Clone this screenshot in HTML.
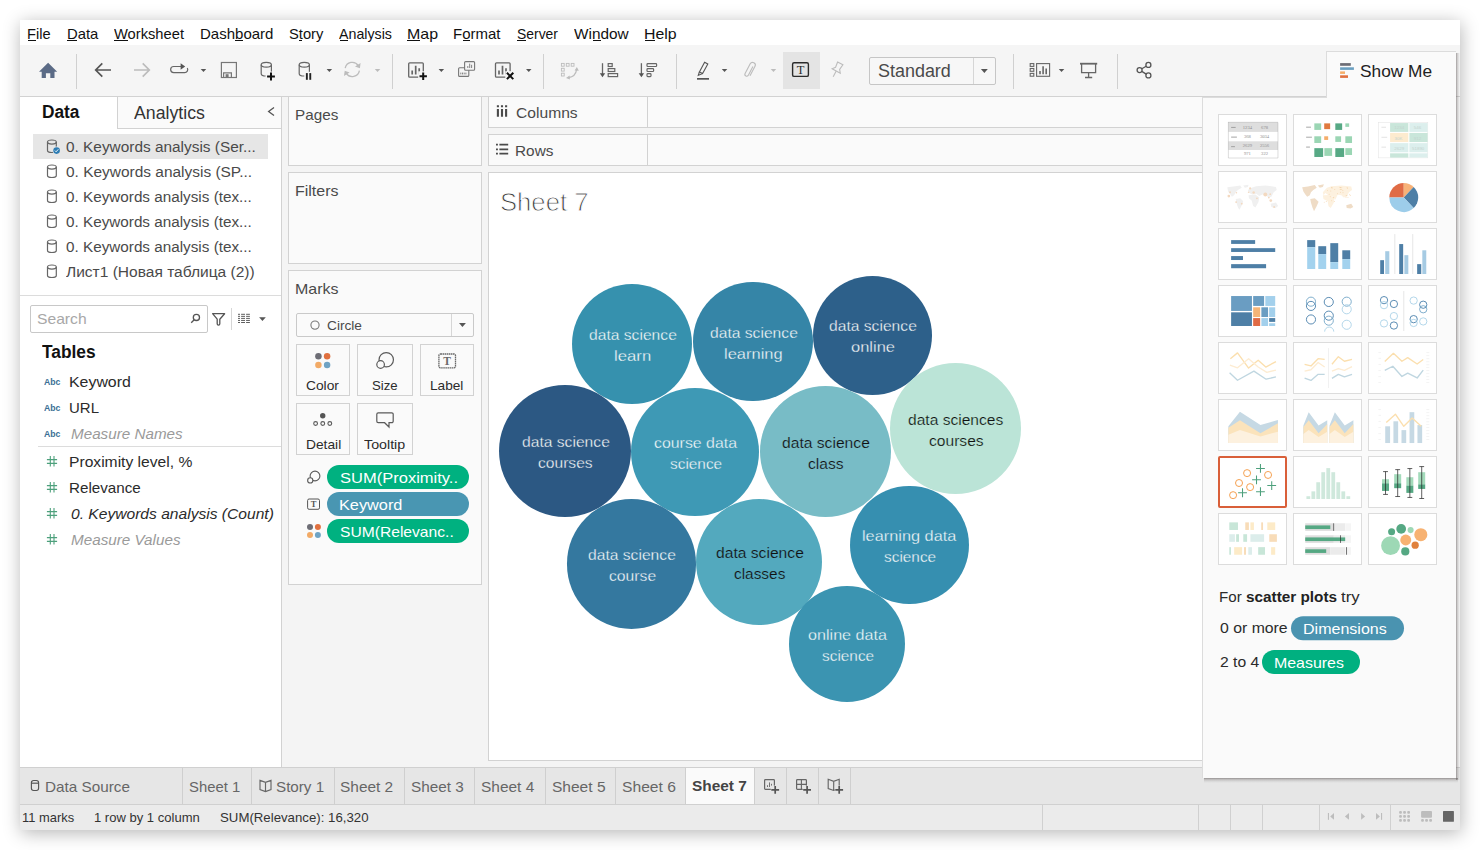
<!DOCTYPE html>
<html lang="en"><head><meta charset="utf-8"><title>Tableau - Sheet 7</title>
<style>
*{box-sizing:border-box;margin:0;padding:0}
html,body{width:1480px;height:850px;background:#fff;overflow:hidden}
body{font-family:"Liberation Sans","Noto Sans CJK SC",sans-serif;position:relative}
#win{position:absolute;left:0;top:0;width:1480px;height:850px}
.b{position:absolute}
.t{position:absolute;white-space:nowrap;line-height:20px;height:20px;transform-origin:0 0}
.ul{position:absolute;height:1px;background:#111}
.ov{position:absolute;left:0;top:0;pointer-events:none}
#frame{left:20px;top:20px;width:1440px;height:810px;background:#f4f4f4;box-shadow:1px 3px 17px rgba(0,0,0,.29)}
#menubar{left:20px;top:20px;width:1440px;height:25px;background:#fff}
#toolbar{left:20px;top:45px;width:1440px;height:52px;background:#f5f5f5;border-bottom:1px solid #d2d2d2}
.sep{width:1px;background:#d0d0d0;top:54px;height:35px}
#tsel{left:783px;top:52px;width:37px;height:37px;background:#e4e4e4}
#std{left:869px;top:57px;width:127px;height:28px;border:1px solid #c6c6c6;border-radius:2px;background:#f7f7f7}
#std i{position:absolute;left:103px;top:0;width:1px;height:26px;background:#d6d6d6}
#left{left:20px;top:97px;width:262px;height:670px;background:#fff;border-right:1px solid #d2d2d2}
#tabA{left:117px;top:97px;width:165px;height:32px;background:#fafafa;border-left:1px solid #d2d2d2;border-bottom:1px solid #d2d2d2;border-right:1px solid #d2d2d2}
#dsel{left:33px;top:134px;width:235px;height:25px;background:#e6e6e6}
#hr1{left:20px;top:295px;width:261px;height:1px;background:#dcdcdc}
#hr2{left:38px;top:446px;width:243px;height:1px;background:#dcdcdc}
#search{left:30px;top:305px;width:178px;height:28px;border:1px solid #c8c8c8;border-radius:2px;background:#fff}
#ssep{left:231px;top:308px;width:1px;height:22px;background:#d6d6d6}
.card{background:#fafafa;border:1px solid #d2d2d2}
#pages{left:288px;top:96px;width:194px;height:70px}
#filters{left:288px;top:172px;width:194px;height:92px}
#marks{left:288px;top:270px;width:194px;height:315px}
#mdd{left:296px;top:313px;width:178px;height:24px;border:1px solid #c9c9c9;border-radius:2px;background:#fafafa}
#mdd i{position:absolute;left:154px;top:0;width:1px;height:22px;background:#d6d6d6}
.mb{border:1px solid #d2d2d2;background:#fafafa;height:52px;top:344px}
.pill{height:24px;border-radius:12px}
.g{background:#00b180}.bl{background:#4996b2}
#cols{left:488px;top:96px;width:966px;height:32px}
#rows{left:488px;top:134px;width:966px;height:32px}
.shsep{width:1px;background:#d2d2d2;left:647px}
#view{left:488px;top:172px;width:966px;height:589px;background:#fff;border:1px solid #d2d2d2}
#tabbar{left:20px;top:767px;width:1440px;height:38px;background:#e6e6e6;border-top:1px solid #d0d0d0;border-bottom:1px solid #d0d0d0}
.tsep{top:768px;width:1px;height:36px;background:#cfcfcf}
#tabact{left:686px;top:768px;width:68px;height:36px;background:#fafafa}
#status{left:20px;top:805px;width:1440px;height:25px;background:#ebebeb}
.ssp{top:805px;width:1px;height:25px;background:#d0d0d0}
#showme{position:absolute;left:1202px;top:97px;width:254px;height:681px;background:#fafafa;border-left:1px solid #dcdcdc}
#showtab{position:absolute;left:1326px;top:51px;width:130px;height:47px;background:#fafafa;border-left:1px solid #dcdcdc;border-top:1px solid #dcdcdc}
#showjoin{position:absolute;left:1327px;top:92px;width:129px;height:12px;background:#fafafa}
.bub{position:absolute;border-radius:50%}
#shr{position:absolute;left:1456px;top:53px;width:4px;height:727px;background:linear-gradient(90deg,rgba(70,62,62,.48),rgba(70,62,62,.22) 35%,rgba(0,0,0,.05) 75%,rgba(0,0,0,0))}
#shb{position:absolute;left:1204px;top:778px;width:254px;height:5px;background:linear-gradient(180deg,rgba(70,62,62,.5),rgba(70,62,62,.2) 35%,rgba(0,0,0,.05) 70%,rgba(0,0,0,0))}
#sht{position:absolute;left:1203px;top:97px;width:123px;height:1px;background:#dcdcdc}

</style></head>
<body>
<div id="win">
<div class="b" id="frame"></div>
<div class="b" id="menubar"></div>
<div class="b" id="toolbar"></div>
<div class="b sep" style="left:76px"></div><div class="b sep" style="left:392px"></div><div class="b sep" style="left:543px"></div><div class="b sep" style="left:676px"></div><div class="b sep" style="left:1013px"></div><div class="b sep" style="left:1117px"></div>
<div class="b" id="tsel"></div>
<div class="b" id="std"><i></i></div>
<div class="b" id="left"></div>
<div class="b" id="tabA"></div>
<div class="b" id="dsel"></div>
<div class="b" id="hr1"></div><div class="b" id="hr2"></div>
<div class="b" id="search"></div><div class="b" id="ssep"></div>
<div class="b card" id="pages"></div>
<div class="b card" id="filters"></div>
<div class="b card" id="marks"></div>
<div class="b" id="mdd"><i></i></div>
<div class="b mb" style="left:296px;width:54px"></div><div class="b mb" style="left:357px;width:56px"></div><div class="b mb" style="left:420px;width:54px"></div>
<div class="b mb" style="left:296px;width:54px;top:403px"></div><div class="b mb" style="left:357px;width:56px;top:403px"></div>
<div class="b pill g" style="left:327px;top:465px;width:142px"></div>
<div class="b pill bl" style="left:327px;top:492px;width:142px"></div>
<div class="b pill g" style="left:327px;top:519px;width:142px"></div>
<div class="b card" id="cols"></div><div class="b shsep" style="top:97px;height:30px"></div>
<div class="b card" id="rows"></div><div class="b shsep" style="top:135px;height:30px"></div>
<div class="b" id="view"></div>
<div class="b" id="tabbar"></div>
<div class="b" id="tabact"></div>
<div class="b tsep" style="left:182px"></div><div class="b tsep" style="left:251px"></div><div class="b tsep" style="left:334px"></div><div class="b tsep" style="left:404px"></div><div class="b tsep" style="left:474px"></div><div class="b tsep" style="left:545px"></div><div class="b tsep" style="left:615px"></div><div class="b tsep" style="left:685px"></div><div class="b tsep" style="left:754px"></div><div class="b tsep" style="left:786px"></div><div class="b tsep" style="left:818px"></div><div class="b tsep" style="left:850px"></div>
<div class="b" id="status"></div>
<div class="b ssp" style="left:1042px"></div><div class="b ssp" style="left:1198px"></div><div class="b ssp" style="left:1230px"></div><div class="b ssp" style="left:1262px"></div><div class="b ssp" style="left:1319px"></div><div class="b ssp" style="left:1390px"></div>

<div class="bub" style="left:571.9px;top:284.1px;width:120.4px;height:120.4px;background:#3691ae"></div>
<div class="bub" style="left:693.3px;top:281.9px;width:119.4px;height:119.4px;background:#3585a7"></div>
<div class="bub" style="left:812.6px;top:275.6px;width:119.0px;height:119.0px;background:#2d608a"></div>
<div class="bub" style="left:889.7px;top:363.1px;width:131.4px;height:131.4px;background:#bbe4d7"></div>
<div class="bub" style="left:499.0px;top:385.1px;width:132.0px;height:132.0px;background:#2c5883"></div>
<div class="bub" style="left:631.3px;top:388.1px;width:127.8px;height:127.8px;background:#3e99b5"></div>
<div class="bub" style="left:760.0px;top:386.3px;width:131.0px;height:131.0px;background:#78bcc6"></div>
<div class="bub" style="left:567.0px;top:499.4px;width:129.2px;height:129.2px;background:#34789f"></div>
<div class="bub" style="left:696.1px;top:499.0px;width:126.0px;height:126.0px;background:#53a9be"></div>
<div class="bub" style="left:850.2px;top:485.7px;width:118.8px;height:118.8px;background:#368fb0"></div>
<div class="bub" style="left:789.0px;top:586.3px;width:116.2px;height:116.2px;background:#3b94b1"></div>
<svg class="ov" width="1480" height="850" viewBox="0 0 1480 850"><path d="M48.1 62.7 L57.2 71.7 H54.5 V78 H50.3 V73.2 H45.9 V78 H41.7 V71.7 H39 Z" fill="#5b6b86"/>
<path d="M96 70 H111 M102.3 63.4 L95.7 70 L102.3 76.6" fill="none" stroke="#555" stroke-width="1.7"/>
<path d="M134 70 H149 M142.7 63.4 L149.3 70 L142.7 76.6" fill="none" stroke="#bcbcbc" stroke-width="1.7"/>
<path d="M181 66.5 H173.7 a3.05 3.05 0 0 0 0 6.1 H184.6 a3.05 3.05 0 0 0 2.7 -4.6" fill="none" stroke="#666" stroke-width="1.2"/><path d="M180.6 63.3 L185.2 66.5 L180.6 69.7 Z" fill="#555"/>
<polygon points="200.7,69 206.2,69 203.45,72" fill="#555"/>
<rect x="221.4" y="62.5" width="15" height="15" fill="none" stroke="#777" stroke-width="1.2"/><path d="M223.6 77.5 V72.8 H231.4 V77.5" fill="none" stroke="#777" stroke-width="1.2"/><rect x="225.6" y="74.2" width="3" height="3.4" fill="#777"/>
<g fill="none" stroke="#666" stroke-width="1.2"><ellipse cx="266.3" cy="64.746" rx="5.1" ry="2.346"/><path d="M261.2 64.746 V73.654 A5.1 2.346 0 0 0 271.4 73.654 V64.746"/></g>
<rect x="265.6" y="71.6" width="10" height="9" fill="#f5f5f5"/>
<path d="M267.1 76.5 H274.9 M271 72.6 V80.4" stroke="#111" stroke-width="2" fill="none"/>
<g fill="none" stroke="#666" stroke-width="1.2"><ellipse cx="304.3" cy="64.746" rx="5.1" ry="2.346"/><path d="M299.2 64.746 V73.654 A5.1 2.346 0 0 0 309.4 73.654 V64.746"/></g>
<rect x="304.3" y="71.8" width="8.5" height="9" fill="#f5f5f5"/>
<rect x="305.9" y="73.1" width="1.9" height="6.7" fill="#222"/><rect x="309.3" y="73.1" width="1.9" height="6.7" fill="#222"/>
<polygon points="326.6,69 332.1,69 329.35,72" fill="#555"/>
<g fill="none" stroke="#bcbcbc" stroke-width="1.3"><path d="M345.2 68.2 A7.2 7.2 0 0 1 358.3 65.6"/><path d="M359.4 70.6 A7.2 7.2 0 0 1 346.3 73.3"/></g><path d="M360.6 62.9 L359.9 68.2 L355 66.4 Z" fill="#bcbcbc"/><path d="M344 76 L344.7 70.7 L349.6 72.5 Z" fill="#bcbcbc"/>
<polygon points="374.8,69 380.3,69 377.55,72" fill="#bcbcbc"/>
<rect x="408.7" y="62.8" width="14.6" height="14.4" rx="1" fill="none" stroke="#666" stroke-width="1.3"/>
<path d="M412.2 74.6 V70.6 M415.7 74.6 V65.8 M419.2 74.6 V68.2" stroke="#666" stroke-width="1.7" fill="none"/>
<rect x="418.2" y="71.3" width="9.5" height="9.5" fill="#f5f5f5"/>
<path d="M419.5 76.2 H426.9 M423.2 72.5 V79.9" stroke="#111" stroke-width="2" fill="none"/>
<polygon points="438.6,69 444.1,69 441.35,72" fill="#555"/>
<g fill="#f5f5f5" stroke="#777" stroke-width="1.1"><rect x="458.6" y="67.8" width="10.2" height="8.6" rx="1"/><rect x="464.6" y="61.6" width="10" height="8.6" rx="1"/></g><path d="M467.8 68 V66 M469.7 68 V63.6 M471.6 68 V64.8 M460.8 74.4 V72.6 M462.5 74.4 V72.6 M464.2 74.4 V72.6 M465.9 74.4 V72.6" stroke="#777" stroke-width="0.9" fill="none"/>
<rect x="495.5" y="62.8" width="14.6" height="14.4" rx="1" fill="none" stroke="#666" stroke-width="1.3"/>
<path d="M499 74.6 V70.6 M502.5 74.6 V65.8 M506 74.6 V68.2" stroke="#666" stroke-width="1.7" fill="none"/>
<rect x="505.3" y="71.2" width="9.5" height="9.5" fill="#f5f5f5"/>
<path d="M506.9 72.7 L513.3 79.1 M513.3 72.7 L506.9 79.1" stroke="#111" stroke-width="2" fill="none"/>
<polygon points="526,69 531.5,69 528.75,72" fill="#555"/>
<g fill="none" stroke="#bcbcbc" stroke-width="0.9"><rect x="561.4" y="63.4" width="2.8" height="2.8"/><rect x="566.3" y="63.4" width="2.8" height="2.8"/><rect x="571.2" y="63.4" width="2.8" height="2.8"/><rect x="561.4" y="68.3" width="2.8" height="2.8"/><rect x="561.4" y="73.2" width="2.8" height="2.8"/></g>
<path d="M568.5 77.6 Q575.6 76.6 576.6 69.6" fill="none" stroke="#bcbcbc" stroke-width="1.2"/><path d="M566 77.9 L569.6 75.5 L569.9 79.5 Z M576.9 67 L578.8 70.8 L574.6 70.6 Z" fill="#bcbcbc"/>
<path d="M602.5 63.2 V75" stroke="#666" stroke-width="1.3" fill="none"/><path d="M599.8 73.2 H605.2 L602.5 77.2 Z" fill="#555"/>
<g fill="none" stroke="#666" stroke-width="1.2"><rect x="608.2" y="63.6" width="4" height="2.9"/><rect x="608.2" y="68.6" width="6.6" height="2.9"/><rect x="608.2" y="73.6" width="9.4" height="3"/></g>
<path d="M641.4 63.2 V75" stroke="#666" stroke-width="1.3" fill="none"/><path d="M638.7 73.2 H644.1 L641.4 77.2 Z" fill="#555"/>
<g fill="none" stroke="#666" stroke-width="1.2"><rect x="647" y="63.6" width="9.6" height="2.9" rx="0.8"/><rect x="647" y="68.6" width="6.6" height="2.9" rx="0.8"/><rect x="647" y="73.6" width="4" height="3" rx="0.8"/></g>
<g fill="none" stroke="#555" stroke-width="1.1"><path d="M704.6 62.3 L707.8 64 L702.6 73.6 L699.4 71.9 Z"/><path d="M699.4 71.9 L698.3 75.4 L702.6 73.6"/></g><rect x="697" y="78" width="12" height="1.7" fill="#555"/>
<polygon points="721.8,69 727.3,69 724.55,72" fill="#555"/>
<path d="M752.6 66.3 L748.2 74.9 a1.9 1.9 0 0 1 -3.4 -1.7 L749.9 63.6 a2.7 2.7 0 0 1 4.8 2.5 L749.7 75.6" transform="translate(0.3,0.2)" fill="none" stroke="#bcbcbc" stroke-width="1.1"/>
<polygon points="770.7,69 776.2,69 773.45,72" fill="#bcbcbc"/>
<rect x="792.6" y="62.8" width="15.8" height="13.6" rx="1.5" fill="none" stroke="#2b2b2b" stroke-width="1.4"/><text x="800.5" y="73.85" text-anchor="middle" font-family="Liberation Serif,serif" font-size="12.5" font-weight="400" fill="#2b2b2b">T</text>
<g fill="none" stroke="#bcbcbc" stroke-width="1.1" transform="rotate(28 837 69.5)"><path d="M834 62.6 H840 L839.3 68.2 L841.6 71.2 H832.4 L834.7 68.2 Z"/><path d="M837 71.2 V77.6"/></g>
<polygon points="980.9,68.9 987.8,68.9 984.35,73.10000000000001" fill="#555"/>
<g fill="none" stroke="#666" stroke-width="1.1"><rect x="1030.2" y="63.6" width="3.6" height="2.8"/><rect x="1030.2" y="68.5" width="3.6" height="2.8"/><rect x="1030.2" y="73.4" width="3.6" height="2.8"/><rect x="1036.6" y="63.6" width="13" height="12.7"/></g>
<path d="M1040 74.2 V71 M1043.1 74.2 V66.2 M1046.2 74.2 V68.6" stroke="#666" stroke-width="1.6" fill="none"/>
<polygon points="1058.8,69 1064.3,69 1061.55,72" fill="#555"/>
<path d="M1080 63.7 H1097.2" stroke="#666" stroke-width="1.8"/><path d="M1081.6 64 V72.6 H1095.6 V64 M1088.6 72.6 V77.4 M1085 77.5 H1092.2" fill="none" stroke="#666" stroke-width="1.3"/>
<g fill="none" stroke="#555" stroke-width="1.3"><circle cx="1148.4" cy="64.9" r="2.5"/><circle cx="1139.6" cy="70.1" r="2.5"/><circle cx="1148.4" cy="75.4" r="2.5"/><path d="M1141.8 68.8 L1146.2 66.2 M1141.8 71.4 L1146.2 74.1"/></g>
<path d="M274 107.4 L268.6 111.5 L274 115.6" fill="none" stroke="#555" stroke-width="1.3"/>
<g fill="none" stroke="#666" stroke-width="1.2"><ellipse cx="51.9" cy="142.024" rx="4.4" ry="2.0240000000000005"/><path d="M47.5 142.024 V150.476 A4.4 2.0240000000000005 0 0 0 56.3 150.476 V142.024"/></g>
<circle cx="56.6" cy="150.6" r="4" fill="#e6e6e6"/><circle cx="56.6" cy="150.6" r="3.3" fill="#2e7db4"/><path d="M54.9 150.6 L56.1 151.8 L58.3 149.3" fill="none" stroke="#fff" stroke-width="0.9"/>
<g fill="none" stroke="#666" stroke-width="1.2"><ellipse cx="51.9" cy="167.024" rx="4.4" ry="2.0240000000000005"/><path d="M47.5 167.024 V175.476 A4.4 2.0240000000000005 0 0 0 56.3 175.476 V167.024"/></g>
<g fill="none" stroke="#666" stroke-width="1.2"><ellipse cx="51.9" cy="192.024" rx="4.4" ry="2.0240000000000005"/><path d="M47.5 192.024 V200.476 A4.4 2.0240000000000005 0 0 0 56.3 200.476 V192.024"/></g>
<g fill="none" stroke="#666" stroke-width="1.2"><ellipse cx="51.9" cy="217.024" rx="4.4" ry="2.0240000000000005"/><path d="M47.5 217.024 V225.476 A4.4 2.0240000000000005 0 0 0 56.3 225.476 V217.024"/></g>
<g fill="none" stroke="#666" stroke-width="1.2"><ellipse cx="51.9" cy="242.024" rx="4.4" ry="2.0240000000000005"/><path d="M47.5 242.024 V250.476 A4.4 2.0240000000000005 0 0 0 56.3 250.476 V242.024"/></g>
<g fill="none" stroke="#666" stroke-width="1.2"><ellipse cx="51.9" cy="267.024" rx="4.4" ry="2.0240000000000005"/><path d="M47.5 267.024 V275.476 A4.4 2.0240000000000005 0 0 0 56.3 275.476 V267.024"/></g>
<g fill="none" stroke="#555" stroke-width="1.3"><circle cx="196.4" cy="317.4" r="3.1"/><path d="M194.2 319.7 L191.2 322.8"/></g>
<path d="M212.6 313.7 H224.6 L219.8 319.2 V323.8 a1.3 1.3 0 0 1 -2.6 0 V319.2 Z" fill="none" stroke="#555" stroke-width="1.3" stroke-linejoin="round"/>
<path d="M238 314.3 H240 M241.1 314.3 H245 M246.1 314.3 H249.9 M238 316.35 H240 M241.1 316.35 H245 M246.1 316.35 H249.9 M238 318.4 H240 M241.1 318.4 H245 M246.1 318.4 H249.9 M238 320.45 H240 M241.1 320.45 H245 M246.1 320.45 H249.9 M238 322.5 H240 M241.1 322.5 H245 M246.1 322.5 H249.9 " stroke="#555" stroke-width="0.95" fill="none"/>
<polygon points="259.1,317.3 265.8,317.3 262.45000000000005,321.1" fill="#555"/>
<path d="M50.3 456.1 V466.5 M54 456.1 V466.5 M46.9 459.6 H57.1 M46.9 463.40000000000003 H57.1" stroke="#4da07c" stroke-width="1.1" fill="none"/>
<path d="M50.3 482.1 V492.5 M54 482.1 V492.5 M46.9 485.6 H57.1 M46.9 489.40000000000003 H57.1" stroke="#4da07c" stroke-width="1.1" fill="none"/>
<path d="M50.3 508.1 V518.5 M54 508.1 V518.5 M46.9 511.6 H57.1 M46.9 515.4 H57.1" stroke="#4da07c" stroke-width="1.1" fill="none"/>
<path d="M50.3 534.1 V544.5 M54 534.1 V544.5 M46.9 537.6 H57.1 M46.9 541.4 H57.1" stroke="#4da07c" stroke-width="1.1" fill="none"/>
<path d="M497.9 109 V116.7 M502 109 V116.7 M506.1 109 V116.7" stroke="#4a4a4a" stroke-width="2.1" fill="none"/><path d="M496.85 106.25 H498.95 M500.95 106.25 H503.05 M505.05 106.25 H507.15" stroke="#4a4a4a" stroke-width="2.1"/>
<path d="M499.4 144.7 H508.2 M499.4 149.3 H508.2 M499.4 153.6 H508.2" stroke="#4a4a4a" stroke-width="1.8" fill="none"/><path d="M496 144.7 H497.9 M496 149.3 H497.9 M496 153.6 H497.9" stroke="#4a4a4a" stroke-width="1.8"/>
<circle cx="315" cy="325.1" r="4.1" fill="none" stroke="#7a7a7a" stroke-width="1.1"/>
<polygon points="459,323 465.9,323 462.45,327" fill="#555"/>
<circle cx="318.4" cy="356.2" r="3.25" fill="#6d6d75"/><circle cx="327.1" cy="356.2" r="3.25" fill="#e0703f"/><circle cx="318.4" cy="364.90000000000003" r="3.25" fill="#f2aa66"/><circle cx="327.1" cy="364.90000000000003" r="3.25" fill="#6fa3c4"/>
<g fill="none" stroke="#5a5a5a" stroke-width="1.2"><circle cx="386.25" cy="359.75" r="7.2"/><circle cx="380.6" cy="364.5" r="3.8" fill="#fafafa"/></g>
<rect x="438.9" y="354" width="16.6" height="13.8" rx="1.5" fill="none" stroke="#6a6a6a" stroke-width="1.3" stroke-dasharray="1.6 0.5"/><text x="447.2" y="364.81" text-anchor="middle" font-family="Liberation Serif,serif" font-size="11.5" font-weight="700" fill="#6a6a6a">T</text>
<circle cx="322.75" cy="415.75" r="2.7" fill="#555"/><g fill="none" stroke="#5a5a5a" stroke-width="1.1"><circle cx="315.6" cy="423.5" r="1.9"/><circle cx="322.75" cy="423.5" r="1.9"/><circle cx="329.8" cy="423.5" r="1.9"/></g>
<path d="M378.2 412.8 H391.8 a1.4 1.4 0 0 1 1.4 1.4 V421.3 a1.4 1.4 0 0 1 -1.4 1.4 H389 V427 L384.6 422.7 H378.2 a1.4 1.4 0 0 1 -1.4 -1.4 V414.2 a1.4 1.4 0 0 1 1.4 -1.4 Z" fill="none" stroke="#5a5a5a" stroke-width="1.2"/>
<g fill="none" stroke="#5a5a5a" stroke-width="1.1"><circle cx="315" cy="476" r="4.9"/><circle cx="310.25" cy="480.4" r="2.6" fill="#fafafa"/></g>
<rect x="307.6" y="499" width="11.9" height="10.3" rx="1.5" fill="none" stroke="#555" stroke-width="1"/><text x="313.55" y="507.03999999999996" text-anchor="middle" font-family="Liberation Serif,serif" font-size="8.5" font-weight="700" fill="#555">T</text>
<circle cx="310.0" cy="527.0" r="3" fill="#6d6d75"/><circle cx="317.9" cy="527.0" r="3" fill="#e0703f"/><circle cx="310.0" cy="534.9000000000001" r="3" fill="#f2aa66"/><circle cx="317.9" cy="534.9000000000001" r="3" fill="#6fa3c4"/>
<g fill="none" stroke="#555" stroke-width="1.15"><rect x="31.4" y="780.5" width="7.2" height="10" rx="2.2"/><path d="M31.4 783.2 H38.6"/></g>
<path d="M260 780.4 L265.5 782.4 L271 780.4 V789.6 L265.5 791.6 L260 789.6 Z M265.5 782.4 V791.6" fill="none" stroke="#666" stroke-width="1.15"/>
<rect x="764.6" y="779.6" width="9.8" height="9.7" rx="0.8" fill="none" stroke="#666" stroke-width="1.2"/><path d="M767.5 787 V785.2 M769.5 787 V782.4 M771.5 787 V783.8" stroke="#666" stroke-width="0.9"/>
<rect x="770.8" y="785.6" width="9" height="9" fill="#e6e6e6"/>
<path d="M771.3000000000001 789.9 H779.1 M775.2 786.0 V793.8" stroke="#555" stroke-width="1.7" fill="none"/>
<rect x="796.6" y="779.6" width="9.8" height="9.7" rx="0.8" fill="none" stroke="#666" stroke-width="1.2"/><path d="M801.4 779.6 V789.3 M796.6 784.4 H806.4" stroke="#666" stroke-width="1.1"/>
<rect x="802.7" y="785.6" width="9" height="9" fill="#e6e6e6"/>
<path d="M803.2 789.9 H811.0 M807.1 786.0 V793.8" stroke="#555" stroke-width="1.7" fill="none"/>
<path d="M828.2 779.3 L833.7 781.3 L839.2 779.3 V788.5 L833.7 790.5 L828.2 788.5 Z M833.7 781.3 V790.5" fill="none" stroke="#666" stroke-width="1.15"/>
<rect x="834.8" y="785.6" width="9" height="9" fill="#e6e6e6"/>
<path d="M835.3000000000001 789.9 H843.1 M839.2 786.0 V793.8" stroke="#555" stroke-width="1.7" fill="none"/>
<g fill="#bdbdbd"><rect x="1327.9" y="813" width="1.1" height="6.8"/><path d="M1334 813 V819.8 L1330.2 816.4 Z"/><path d="M1349 813 V819.8 L1344.9 816.4 Z"/><path d="M1361.1 813 V819.8 L1365.1 816.4 Z"/><path d="M1376 813 V819.8 L1379.9 816.4 Z"/><rect x="1381" y="813" width="1.1" height="6.8"/></g>
<g fill="#bdbdbd"><rect x="1399.1" y="810.9" width="2.8" height="2.8" rx="1"/><rect x="1399.1" y="814.9499999999999" width="2.8" height="2.8" rx="1"/><rect x="1399.1" y="819.0" width="2.8" height="2.8" rx="1"/><rect x="1403.1499999999999" y="810.9" width="2.8" height="2.8" rx="1"/><rect x="1403.1499999999999" y="814.9499999999999" width="2.8" height="2.8" rx="1"/><rect x="1403.1499999999999" y="819.0" width="2.8" height="2.8" rx="1"/><rect x="1407.1999999999998" y="810.9" width="2.8" height="2.8" rx="1"/><rect x="1407.1999999999998" y="814.9499999999999" width="2.8" height="2.8" rx="1"/><rect x="1407.1999999999998" y="819.0" width="2.8" height="2.8" rx="1"/></g>
<g fill="#bdbdbd"><rect x="1421.1" y="810.9" width="10.9" height="6.8" rx="1"/><rect x="1421.1" y="819" width="2.8" height="2.8" rx="1"/><rect x="1425.1499999999999" y="819" width="2.8" height="2.8" rx="1"/><rect x="1429.1999999999998" y="819" width="2.8" height="2.8" rx="1"/></g>
<rect x="1443" y="810.9" width="10.9" height="10.9" rx="0.6" fill="#666"/></svg>
<i class="ul" style="left:27.68px;top:40px;width:8.34px"></i>
<span class="t" style="left:27.38px;top:24px;font-size:15px;color:#111;transform:scaleX(0.9753);">File</span>
<i class="ul" style="left:66.86px;top:40px;width:10.13px"></i>
<span class="t" style="left:66.56px;top:24px;font-size:15px;color:#111;transform:scaleX(0.9902);">Data</span>
<i class="ul" style="left:114.30px;top:40px;width:13.27px"></i>
<span class="t" style="left:114.00px;top:24px;font-size:15px;color:#111;transform:scaleX(0.9796);">Worksheet</span>
<i class="ul" style="left:234.99px;top:40px;width:7.75px"></i>
<span class="t" style="left:199.65px;top:24px;font-size:15px;color:#111;transform:scaleX(1.0007);">Dashboard</span>
<i class="ul" style="left:298.78px;top:40px;width:3.49px"></i>
<span class="t" style="left:288.66px;top:24px;font-size:15px;color:#111;transform:scaleX(0.9810);">Story</span>
<i class="ul" style="left:339.60px;top:40px;width:8.89px"></i>
<span class="t" style="left:339.30px;top:24px;font-size:15px;color:#111;transform:scaleX(0.9484);">Analysis</span>
<i class="ul" style="left:407.37px;top:40px;width:12.70px"></i>
<span class="t" style="left:407.07px;top:24px;font-size:15px;color:#111;transform:scaleX(1.0642);">Map</span>
<i class="ul" style="left:462.60px;top:40px;width:7.73px"></i>
<span class="t" style="left:453.15px;top:24px;font-size:15px;color:#111;transform:scaleX(0.9989);">Format</span>
<i class="ul" style="left:516.90px;top:40px;width:8.68px"></i>
<span class="t" style="left:516.60px;top:24px;font-size:15px;color:#111;transform:scaleX(0.9272);">Server</span>
<i class="ul" style="left:592.60px;top:40px;width:7.94px"></i>
<span class="t" style="left:574.40px;top:24px;font-size:15px;color:#111;transform:scaleX(1.0235);">Window</span>
<i class="ul" style="left:644.58px;top:40px;width:10.87px"></i>
<span class="t" style="left:644.28px;top:24px;font-size:15px;color:#111;transform:scaleX(1.0586);">Help</span>
<span class="t" style="left:878.13px;top:60.8px;font-size:17.5px;color:#4a4a4a;transform:scaleX(1.0253);">Standard</span>
<span class="t" style="left:42.00px;top:102px;font-size:18px;color:#111;transform:scaleX(0.9605);font-weight:700;">Data</span>
<span class="t" style="left:134.00px;top:103px;font-size:17.5px;color:#333;transform:scaleX(1.0115);">Analytics</span>
<span class="t" style="left:65.95px;top:136.5px;font-size:14px;color:#4a4a4a;transform:scaleX(1.0988);">0. Keywords analysis (Ser...</span>
<span class="t" style="left:65.95px;top:161.5px;font-size:14px;color:#4a4a4a;transform:scaleX(1.1034);">0. Keywords analysis (SP...</span>
<span class="t" style="left:65.95px;top:186.5px;font-size:14px;color:#4a4a4a;transform:scaleX(1.0904);">0. Keywords analysis (tex...</span>
<span class="t" style="left:65.95px;top:211.5px;font-size:14px;color:#4a4a4a;transform:scaleX(1.0904);">0. Keywords analysis (tex...</span>
<span class="t" style="left:65.95px;top:236.5px;font-size:14px;color:#4a4a4a;transform:scaleX(1.0904);">0. Keywords analysis (tex...</span>
<span class="t" style="left:65.80px;top:261.5px;font-size:14px;color:#4a4a4a;transform:scaleX(1.1090);">Лист1 (Новая таблица (2))</span>
<span class="t" style="left:37.39px;top:309px;font-size:14.5px;color:#a8a8a8;transform:scaleX(1.0802);">Search</span>
<span class="t" style="left:42.26px;top:342px;font-size:18px;color:#111;transform:scaleX(0.9626);font-weight:700;">Tables</span>
<span class="t" style="left:69.28px;top:372px;font-size:15px;color:#2b2b2b;transform:scaleX(1.0596);">Keyword</span>
<span class="t" style="left:69.35px;top:398px;font-size:15px;color:#2b2b2b;transform:scaleX(0.9982);">URL</span>
<span class="t" style="left:70.99px;top:424px;font-size:15px;color:#9a9a9a;transform:scaleX(1.0151);font-style:italic;">Measure Names</span>
<span class="t" style="left:69.30px;top:452px;font-size:15px;color:#2b2b2b;transform:scaleX(1.0421);">Proximity level, %</span>
<span class="t" style="left:69.34px;top:478px;font-size:15px;color:#2b2b2b;transform:scaleX(1.0116);">Relevance</span>
<span class="t" style="left:70.72px;top:504px;font-size:15px;color:#2b2b2b;transform:scaleX(1.0398);font-style:italic;">0. Keywords analysis (Count)</span>
<span class="t" style="left:70.99px;top:530px;font-size:15px;color:#9a9a9a;transform:scaleX(1.0159);font-style:italic;">Measure Values</span>
<span class="t" style="left:43.86px;top:372px;font-size:9px;color:#3a6f95;transform:scaleX(0.9636);font-weight:700;">Abc</span>
<span class="t" style="left:43.86px;top:398px;font-size:9px;color:#3a6f95;transform:scaleX(0.9636);font-weight:700;">Abc</span>
<span class="t" style="left:43.86px;top:424px;font-size:9px;color:#3a6f95;transform:scaleX(0.9636);font-weight:700;">Abc</span>
<span class="t" style="left:295.18px;top:105px;font-size:14.5px;color:#4a4a4a;transform:scaleX(1.0522);">Pages</span>
<span class="t" style="left:295.12px;top:181px;font-size:14.5px;color:#4a4a4a;transform:scaleX(1.1020);">Filters</span>
<span class="t" style="left:295.12px;top:279px;font-size:14.5px;color:#4a4a4a;transform:scaleX(1.1020);">Marks</span>
<span class="t" style="left:326.74px;top:316px;font-size:13.5px;color:#4a4a4a;transform:scaleX(1.0135);">Circle</span>
<span class="t" style="left:306.33px;top:376px;font-size:13.5px;color:#2b2b2b;transform:scaleX(1.0208);">Color</span>
<span class="t" style="left:371.81px;top:376px;font-size:13.5px;color:#2b2b2b;transform:scaleX(0.9743);">Size</span>
<span class="t" style="left:430.49px;top:376px;font-size:13.5px;color:#2b2b2b;transform:scaleX(1.0112);">Label</span>
<span class="t" style="left:305.58px;top:435px;font-size:13.5px;color:#2b2b2b;transform:scaleX(1.0198);">Detail</span>
<span class="t" style="left:364.34px;top:435px;font-size:13.5px;color:#2b2b2b;transform:scaleX(1.0562);">Tooltip</span>
<span class="t" style="left:339.75px;top:468px;font-size:14.5px;color:#fff;transform:scaleX(1.1389);">SUM(Proximity..</span>
<span class="t" style="left:339.19px;top:495px;font-size:14.5px;color:#fff;transform:scaleX(1.1244);">Keyword</span>
<span class="t" style="left:339.79px;top:522px;font-size:14.5px;color:#fff;transform:scaleX(1.0773);">SUM(Relevanc..</span>
<span class="t" style="left:515.72px;top:103px;font-size:15px;color:#4a4a4a;transform:scaleX(1.0414);">Columns</span>
<span class="t" style="left:515.22px;top:141px;font-size:15px;color:#4a4a4a;transform:scaleX(1.0238);">Rows</span>
<span class="t" style="left:499.94px;top:192px;font-size:25.5px;color:#3c3c3c;transform:scaleX(1.0058);-webkit-text-stroke:0.9px #fff;">Sheet 7</span>
<span class="t" style="left:44.73px;top:777px;font-size:15px;color:#666;transform:scaleX(1.0184);">Data Source</span>
<span class="t" style="left:189.46px;top:777px;font-size:15px;color:#666;transform:scaleX(0.9891);">Sheet 1</span>
<span class="t" style="left:275.94px;top:777px;font-size:15px;color:#666;transform:scaleX(1.0130);">Story 1</span>
<span class="t" style="left:340.43px;top:777px;font-size:15px;color:#666;transform:scaleX(1.0289);">Sheet 2</span>
<span class="t" style="left:410.73px;top:777px;font-size:15px;color:#666;transform:scaleX(1.0209);">Sheet 3</span>
<span class="t" style="left:480.63px;top:777px;font-size:15px;color:#666;transform:scaleX(1.0297);">Sheet 4</span>
<span class="t" style="left:551.62px;top:777px;font-size:15px;color:#666;transform:scaleX(1.0348);">Sheet 5</span>
<span class="t" style="left:621.52px;top:777px;font-size:15px;color:#666;transform:scaleX(1.0428);">Sheet 6</span>
<span class="t" style="left:692.09px;top:776px;font-size:15px;color:#444;transform:scaleX(1.0278);font-weight:700;">Sheet 7</span>
<span class="t" style="left:22.01px;top:808px;font-size:13px;color:#333;transform:scaleX(0.9922);">11 marks</span>
<span class="t" style="left:94.30px;top:808px;font-size:13px;color:#333;transform:scaleX(1.0024);">1 row by 1 column</span>
<span class="t" style="left:219.54px;top:808px;font-size:13px;color:#333;transform:scaleX(1.0176);">SUM(Relevance): 16,320</span>
<span class="t" style="left:588.84px;top:325px;font-size:14px;color:#fff;transform:scaleX(1.1174);-webkit-text-stroke:0.3px #3691ae;">data science</span>
<span class="t" style="left:614.00px;top:346px;font-size:14px;color:#fff;transform:scaleX(1.1966);-webkit-text-stroke:0.3px #3691ae;">learn</span>
<span class="t" style="left:709.74px;top:323px;font-size:14px;color:#fff;transform:scaleX(1.1174);-webkit-text-stroke:0.3px #3585a7;">data science</span>
<span class="t" style="left:724.17px;top:344px;font-size:14px;color:#fff;transform:scaleX(1.1771);-webkit-text-stroke:0.3px #3585a7;">learning</span>
<span class="t" style="left:828.84px;top:316px;font-size:14px;color:#fff;transform:scaleX(1.1174);-webkit-text-stroke:0.3px #2d608a;">data science</span>
<span class="t" style="left:850.76px;top:337px;font-size:14px;color:#fff;transform:scaleX(1.1779);-webkit-text-stroke:0.3px #2d608a;">online</span>
<span class="t" style="left:908.29px;top:410px;font-size:14px;color:#111;transform:scaleX(1.1127);-webkit-text-stroke:0.2px #bbe4d7;">data sciences</span>
<span class="t" style="left:928.69px;top:431px;font-size:14px;color:#111;transform:scaleX(1.1146);-webkit-text-stroke:0.2px #bbe4d7;">courses</span>
<span class="t" style="left:521.74px;top:432px;font-size:14px;color:#fff;transform:scaleX(1.1174);-webkit-text-stroke:0.3px #2c5883;">data science</span>
<span class="t" style="left:538.29px;top:453px;font-size:14px;color:#fff;transform:scaleX(1.1146);-webkit-text-stroke:0.3px #2c5883;">courses</span>
<span class="t" style="left:653.98px;top:433px;font-size:14px;color:#fff;transform:scaleX(1.1340);-webkit-text-stroke:0.3px #3e99b5;">course data</span>
<span class="t" style="left:669.70px;top:454px;font-size:14px;color:#fff;transform:scaleX(1.0989);-webkit-text-stroke:0.3px #3e99b5;">science</span>
<span class="t" style="left:782.24px;top:433px;font-size:14px;color:#111;transform:scaleX(1.1174);-webkit-text-stroke:0.2px #78bcc6;">data science</span>
<span class="t" style="left:808.29px;top:454px;font-size:14px;color:#111;transform:scaleX(1.1129);-webkit-text-stroke:0.2px #78bcc6;">class</span>
<span class="t" style="left:588.34px;top:545px;font-size:14px;color:#fff;transform:scaleX(1.1174);-webkit-text-stroke:0.3px #34789f;">data science</span>
<span class="t" style="left:608.64px;top:566px;font-size:14px;color:#fff;transform:scaleX(1.1220);-webkit-text-stroke:0.3px #34789f;">course</span>
<span class="t" style="left:715.84px;top:543px;font-size:14px;color:#111;transform:scaleX(1.1174);-webkit-text-stroke:0.2px #53a9be;">data science</span>
<span class="t" style="left:734.00px;top:564px;font-size:14px;color:#111;transform:scaleX(1.0995);-webkit-text-stroke:0.2px #53a9be;">classes</span>
<span class="t" style="left:862.44px;top:526px;font-size:14px;color:#fff;transform:scaleX(1.1650);-webkit-text-stroke:0.3px #368fb0;">learning data</span>
<span class="t" style="left:884.10px;top:547px;font-size:14px;color:#fff;transform:scaleX(1.0989);-webkit-text-stroke:0.3px #368fb0;">science</span>
<span class="t" style="left:807.92px;top:625px;font-size:14px;color:#fff;transform:scaleX(1.1529);-webkit-text-stroke:0.3px #3b94b1;">online data</span>
<span class="t" style="left:821.60px;top:646px;font-size:14px;color:#fff;transform:scaleX(1.0989);-webkit-text-stroke:0.3px #3b94b1;">science</span>
<div id="shr"></div><div id="shb"></div><div id="showme"></div><div id="showtab"></div><div id="showjoin"></div><div id="sht"></div>
<svg class="ov" width="1480" height="850" viewBox="0 0 1480 850"><rect x="1340.1" y="63.1" width="10.7" height="2.7" fill="#6d6d75"/><rect x="1340.1" y="67.3" width="13.8" height="2.6" fill="#6a9fc0"/><rect x="1340.1" y="71.4" width="4.9" height="2.5" fill="#f5ad6a"/><rect x="1340.1" y="75.3" width="7.9" height="2.6" fill="#e0703f"/>
<g transform="translate(1218,114)"><rect x="0.5" y="0.5" width="68" height="51" fill="#fff" stroke="#dcdcdc" stroke-width="1"/><g transform="translate(0.5,0.4)"><rect x="9.88" y="7.91" width="49.56" height="9.58" fill="#dedede"/><rect x="9.88" y="26.91" width="49.56" height="8.67" fill="#dedede"/><rect x="9.88" y="7.91" width="49.56" height="35.73" fill="none" stroke="#8a8a8a" stroke-width="0.5" stroke-dasharray="0.6 0.4"/><text x="28.88" y="14.78" text-anchor="middle" font-family="Liberation Serif,serif" font-size="4.6" fill="#8c8c8c">1234</text><text x="46.06" y="14.78" text-anchor="middle" font-family="Liberation Serif,serif" font-size="4.6" fill="#8c8c8c">678</text><text x="28.88" y="23.75" text-anchor="middle" font-family="Liberation Serif,serif" font-size="4.6" fill="#8c8c8c">368</text><text x="46.06" y="23.75" text-anchor="middle" font-family="Liberation Serif,serif" font-size="4.6" fill="#8c8c8c">3034</text><text x="28.88" y="32.72" text-anchor="middle" font-family="Liberation Serif,serif" font-size="4.6" fill="#8c8c8c">2629</text><text x="46.06" y="32.72" text-anchor="middle" font-family="Liberation Serif,serif" font-size="4.6" fill="#8c8c8c">2556</text><text x="28.88" y="40.93" text-anchor="middle" font-family="Liberation Serif,serif" font-size="4.6" fill="#8c8c8c">971</text><text x="46.06" y="40.93" text-anchor="middle" font-family="Liberation Serif,serif" font-size="4.6" fill="#8c8c8c">322</text><rect x="12.62" y="12.52" width="4.56" height="0.9" fill="#9a9a9a"/><rect x="12.62" y="22.25" width="5.78" height="0.9" fill="#9a9a9a"/><rect x="12.62" y="31.83" width="3.8" height="0.9" fill="#9a9a9a"/></g></g>
<g transform="translate(1293,114)"><rect x="0.5" y="0.5" width="68" height="51" fill="#fff" stroke="#dcdcdc" stroke-width="1"/><g transform="translate(0.5,0.4)"><rect x="12.62" y="12.27" width="4.86" height="1" fill="#a8a8a8"/><rect x="12.62" y="22.3" width="5.78" height="1" fill="#a8a8a8"/><rect x="12.62" y="32.18" width="3.8" height="1" fill="#a8a8a8"/><rect x="20.83" y="8.97" width="6.84" height="6.54" fill="#9bd6b4"/><rect x="30.71" y="8.97" width="5.93" height="5.78" fill="#e07a3f"/><rect x="41.81" y="8.97" width="6.84" height="6.54" fill="#57a985"/><rect x="51.84" y="8.97" width="3.8" height="3.5" fill="#9bd6b4"/><rect x="20.83" y="21.89" width="6.84" height="6.69" fill="#9bd6b4"/><rect x="30.71" y="21.89" width="3.95" height="3.65" fill="#f5ad6a"/><rect x="41.81" y="21.89" width="5.78" height="5.62" fill="#9bd6b4"/><rect x="51.84" y="21.89" width="6.69" height="6.69" fill="#9bd6b4"/><rect x="20.83" y="33.75" width="8.82" height="8.82" fill="#57a985"/><rect x="30.86" y="33.75" width="7.75" height="7.75" fill="#9bd6b4"/><rect x="41.81" y="33.75" width="8.82" height="8.82" fill="#57a985"/><rect x="51.84" y="33.75" width="6.69" height="6.84" fill="#9bd6b4"/></g></g>
<g transform="translate(1368,114)"><rect x="0.5" y="0.5" width="68" height="51" fill="#fff" stroke="#dcdcdc" stroke-width="1"/><g transform="translate(0.5,0.4)"><rect x="10.19" y="8.21" width="49.1" height="35.27" fill="#fff" stroke="#e2e2e2" stroke-width="0.5"/><rect x="12.92" y="12.37" width="4.56" height="0.9" fill="#e0e0e0"/><rect x="12.92" y="22.400000000000002" width="5.78" height="0.9" fill="#e0e0e0"/><rect x="12.92" y="32.28" width="4.56" height="0.9" fill="#e0e0e0"/><rect x="21.59" y="8.67" width="18.24" height="8.82" fill="#c9e6da"/><rect x="40.89" y="8.67" width="18.24" height="8.82" fill="#dcefed"/><rect x="21.59" y="18.55" width="18.24" height="9.12" fill="#fdebcf"/><rect x="40.89" y="18.55" width="18.24" height="9.12" fill="#c9e6da"/><rect x="21.59" y="28.73" width="18.24" height="9.12" fill="#dcefed"/><rect x="40.89" y="28.73" width="18.24" height="9.12" fill="#dcefed"/><rect x="21.59" y="38.92" width="18.24" height="4.26" fill="#c9e6da"/><rect x="40.89" y="38.92" width="18.24" height="4.26" fill="#dcefed"/><text x="30.71" y="15.09" text-anchor="middle" font-family="Liberation Sans,sans-serif" font-size="4.4" fill="#c4d4cf">1234</text><text x="48.95" y="15.09" text-anchor="middle" font-family="Liberation Sans,sans-serif" font-size="4.4" fill="#c4d4cf">546</text><text x="29.95" y="25.43" text-anchor="middle" font-family="Liberation Sans,sans-serif" font-size="4.4" fill="#c4d4cf">30K</text><text x="48.95" y="25.43" text-anchor="middle" font-family="Liberation Sans,sans-serif" font-size="4.4" fill="#c4d4cf">912</text><text x="30.71" y="35.309999999999995" text-anchor="middle" font-family="Liberation Sans,sans-serif" font-size="4.4" fill="#c4d4cf">2629</text><text x="49.71" y="35.309999999999995" text-anchor="middle" font-family="Liberation Sans,sans-serif" font-size="4.4" fill="#c4d4cf">51890</text></g></g>
<g transform="translate(1218,171)"><rect x="0.5" y="0.5" width="68" height="51" fill="#fff" stroke="#dcdcdc" stroke-width="1"/><g transform="translate(0.5,0.4)"><polygon points="8.82,15.81 14.9,15.2 21.74,13.99 23.26,16.27 19.46,18.55 17.18,20.83 15.66,23.87 13.38,25.39 11.86,23.11 9.58,20.07" fill="#f0f0f0"/><polygon points="17.18,27.67 21.74,26.91 24.78,29.95 23.26,33.75 20.98,38.31 19.46,36.03 17.94,31.47" fill="#f0f0f0"/><polygon points="24.78,13.99 30.1,13.23 29.34,15.51 26.3,16.27" fill="#f0f0f0"/><polygon points="29.34,18.55 33.14,16.27 37.7,14.75 46.82,13.99 57.46,15.51 58.22,18.55 55.18,20.83 52.9,25.39 49.86,26.15 47.58,23.87 43.78,23.11 40.74,24.63 37.7,22.35 33.9,23.11 30.86,21.59" fill="#f0f0f0"/><polygon points="30.1,23.87 36.94,23.11 40.74,26.15 39.98,30.71 36.94,36.03 34.66,34.51 33.14,29.19 30.4,26.91" fill="#f0f0f0"/><polygon points="52.14,32.23 57.46,31.01 59.74,34.51 56.7,36.79 52.9,35.57" fill="#f0f0f0"/><circle cx="10.34" cy="24.63" r="1.37" fill="#f3d9c0"/><circle cx="11.55" cy="20.83" r="0.91" fill="#f3d9c0"/><circle cx="17.94" cy="21.28" r="0.76" fill="#f3d9c0"/><circle cx="17.63" cy="30.71" r="0.91" fill="#f3d9c0"/><circle cx="23.26" cy="32.23" r="0.91" fill="#f3d9c0"/><circle cx="31.62" cy="17.03" r="1.06" fill="#f3d9c0"/><circle cx="30.1" cy="20.83" r="0.76" fill="#f3d9c0"/><circle cx="35.12" cy="21.13" r="1.22" fill="#f3d9c0"/><circle cx="38.46" cy="26.91" r="0.91" fill="#f3d9c0"/><circle cx="46.82" cy="23.11" r="1.98" fill="#f3d9c0"/><circle cx="51.69" cy="22.8" r="0.91" fill="#f3d9c0"/><circle cx="50.32" cy="26.15" r="0.91" fill="#f3d9c0"/><circle cx="52.3" cy="29.19" r="1.37" fill="#f3d9c0"/><circle cx="55.64" cy="35.57" r="0.91" fill="#f3d9c0"/></g></g>
<g transform="translate(1293,171)"><rect x="0.5" y="0.5" width="68" height="51" fill="#fff" stroke="#dcdcdc" stroke-width="1"/><g transform="translate(0.5,0.4)"><polygon points="8.67,15.81 14.44,15.2 21.28,13.68 23.26,16.27 19.76,18.55 17.48,20.83 16.27,23.87 13.68,25.39 11.86,23.11 9.88,20.07" fill="#efdcc6"/><polygon points="16.72,27.67 21.28,26.91 25.08,30.4 23.26,34.51 20.52,39.83 19.0,36.03 17.48,31.47" fill="#efdcc6"/><polygon points="24.32,13.99 30.4,12.92 29.34,15.51 26.3,16.27" fill="#efdcc6"/><polygon points="33.44,16.27 38.01,14.75 47.89,13.99 57.77,15.2 58.53,18.55 55.49,20.83 53.21,25.39 50.17,26.15 47.89,23.87 44.09,23.41 41.81,28.43 39.53,25.39 34.97,23.87 31.92,21.59 29.95,23.87 29.34,20.83" fill="#fdf1df"/><polygon points="29.34,23.87 36.49,23.56 41.05,26.91 40.29,31.47 37.25,36.49 34.97,34.97 34.2,29.95 29.95,27.67" fill="#fdf1df"/><polygon points="52.75,33.75 57.77,32.23 59.74,35.57 57.01,37.09 53.21,36.49" fill="#efdcc6"/><circle cx="36.74" cy="25.3" r="0.49" fill="#f2cfa3"/><circle cx="40.25" cy="26.4" r="0.49" fill="#f2cfa3"/><circle cx="47.05" cy="16.42" r="0.49" fill="#f2cfa3"/><circle cx="30.75" cy="30.73" r="0.49" fill="#f2cfa3"/><circle cx="37.3" cy="19.55" r="0.49" fill="#f2cfa3"/><circle cx="56.89" cy="23.92" r="0.49" fill="#f2cfa3"/><circle cx="52.66" cy="24.04" r="0.49" fill="#f2cfa3"/><circle cx="47.41" cy="18.0" r="0.49" fill="#f2cfa3"/><circle cx="48.27" cy="16.39" r="0.49" fill="#f2cfa3"/><circle cx="38.42" cy="15.78" r="0.49" fill="#f2cfa3"/><circle cx="53.43" cy="23.97" r="0.49" fill="#f2cfa3"/><circle cx="40.91" cy="30.06" r="0.49" fill="#f2cfa3"/><circle cx="53.79" cy="17.01" r="0.49" fill="#f2cfa3"/><circle cx="34.02" cy="19.23" r="0.49" fill="#f2cfa3"/><circle cx="56.09" cy="23.29" r="0.49" fill="#f2cfa3"/><circle cx="47.08" cy="20.79" r="0.49" fill="#f2cfa3"/><circle cx="43.9" cy="22.36" r="0.49" fill="#f2cfa3"/><circle cx="39.74" cy="26.05" r="0.49" fill="#f2cfa3"/><circle cx="48.26" cy="18.23" r="0.49" fill="#f2cfa3"/><circle cx="54.47" cy="25.76" r="0.49" fill="#f2cfa3"/><circle cx="49.39" cy="19.12" r="0.49" fill="#f2cfa3"/><circle cx="52.53" cy="25.84" r="0.49" fill="#f2cfa3"/><circle cx="37.99" cy="16.38" r="0.49" fill="#f2cfa3"/><circle cx="32.76" cy="30.05" r="0.49" fill="#f2cfa3"/><circle cx="41.32" cy="18.0" r="0.49" fill="#f2cfa3"/><circle cx="38.22" cy="29.46" r="0.49" fill="#f2cfa3"/><circle cx="53.62" cy="16.02" r="0.49" fill="#f2cfa3"/><circle cx="46.75" cy="16.04" r="0.49" fill="#f2cfa3"/><circle cx="49.52" cy="21.34" r="0.49" fill="#f2cfa3"/><circle cx="38.64" cy="16.63" r="0.49" fill="#f2cfa3"/><circle cx="46.36" cy="15.78" r="0.49" fill="#f2cfa3"/><circle cx="35.66" cy="22.77" r="0.49" fill="#f2cfa3"/><circle cx="46.65" cy="18.1" r="0.49" fill="#f2cfa3"/></g></g>
<g transform="translate(1368,171)"><rect x="0.5" y="0.5" width="68" height="51" fill="#fff" stroke="#dcdcdc" stroke-width="1"/><g transform="translate(0.5,0.4)"><path d="M35.27 26.15 L20.83 26.15 A14.44 14.44 0 0 1 35.27 11.71 Z" fill="#e06b45"/><path d="M35.27 26.15 L35.27 11.71 A14.44 14.44 0 0 1 45.12 15.59 Z" fill="#f7b278"/><path d="M35.27 26.15 L45.12 15.59 A14.44 14.44 0 0 1 45.12 36.71 Z" fill="#4e7fa6"/><path d="M35.27 26.15 L45.12 36.71 A14.44 14.44 0 0 1 20.83 26.15 Z" fill="#9dcdea"/></g></g>
<g transform="translate(1218,228)"><rect x="0.5" y="0.5" width="68" height="51" fill="#fff" stroke="#dcdcdc" stroke-width="1"/><g transform="translate(0.5,0.4)"><rect x="12.62" y="11.71" width="24.02" height="3.8" fill="#4e7fa6"/><rect x="12.62" y="19.76" width="44.09" height="3.8" fill="#4e7fa6"/><rect x="12.62" y="27.67" width="11.86" height="3.95" fill="#4e7fa6"/><rect x="12.62" y="35.73" width="34.97" height="4.1" fill="#4e7fa6"/></g></g>
<g transform="translate(1293,228)"><rect x="0.5" y="0.5" width="68" height="51" fill="#fff" stroke="#dcdcdc" stroke-width="1"/><g transform="translate(0.5,0.4)"><rect x="13.68" y="11.71" width="8.06" height="7.15" fill="#4e7fa6"/><rect x="13.68" y="18.85" width="8.06" height="21.74" fill="#a3d2ee"/><rect x="24.78" y="17.79" width="7.91" height="7.91" fill="#4e7fa6"/><rect x="24.78" y="25.69" width="7.91" height="14.9" fill="#a3d2ee"/><rect x="36.79" y="14.75" width="7.91" height="19.0" fill="#4e7fa6"/><rect x="36.79" y="33.75" width="7.91" height="6.84" fill="#a3d2ee"/><rect x="48.8" y="21.89" width="7.91" height="8.82" fill="#4e7fa6"/><rect x="48.8" y="30.71" width="7.91" height="9.88" fill="#a3d2ee"/></g></g>
<g transform="translate(1368,228)"><rect x="0.5" y="0.5" width="68" height="51" fill="#fff" stroke="#dcdcdc" stroke-width="1"/><g transform="translate(0.5,0.4)"><path d="M26.3 5.62 V45.61 M44.24 5.62 V45.61" stroke="#cfcfcf" stroke-width="0.5"/><rect x="11.71" y="31.77" width="3.8" height="13.83" fill="#4e7fa6"/><rect x="16.72" y="22.8" width="4.1" height="22.8" fill="#a6cbe3"/><rect x="30.71" y="15.66" width="3.95" height="29.95" fill="#4e7fa6"/><rect x="35.88" y="26.76" width="3.95" height="18.85" fill="#a6cbe3"/><rect x="48.65" y="35.73" width="4.1" height="9.88" fill="#4e7fa6"/><rect x="53.82" y="21.89" width="3.95" height="23.72" fill="#a6cbe3"/></g></g>
<g transform="translate(1218,285)"><rect x="0.5" y="0.5" width="68" height="51" fill="#fff" stroke="#dcdcdc" stroke-width="1"/><g transform="translate(0.5,0.4)"><rect x="12.62" y="10.64" width="20.83" height="14.9" fill="#6a9dc2"/><rect x="12.62" y="26.91" width="20.83" height="13.68" fill="#4e7fa6"/><rect x="34.66" y="10.64" width="10.95" height="9.88" fill="#6a9dc2"/><rect x="46.82" y="10.64" width="9.88" height="9.88" fill="#a3d0ec"/><rect x="34.66" y="21.89" width="6.99" height="9.73" fill="#f5b577"/><rect x="42.87" y="21.89" width="6.69" height="9.73" fill="#6a9dc2"/><rect x="50.62" y="21.89" width="6.08" height="9.73" fill="#a3d0ec"/><rect x="34.66" y="32.68" width="6.99" height="7.91" fill="#e06b45"/><rect x="42.87" y="32.68" width="6.69" height="7.91" fill="#a3d0ec"/><rect x="50.62" y="32.68" width="6.08" height="3.8" fill="#4e7fa6"/><rect x="50.62" y="37.85" width="6.08" height="2.74" fill="#a3d0ec"/></g></g>
<g transform="translate(1293,285)"><rect x="0.5" y="0.5" width="68" height="51" fill="#fff" stroke="#dcdcdc" stroke-width="1"/><g transform="translate(0.5,0.4)"><circle cx="17.48" cy="16.27" r="4.56" fill="none" stroke="#6aa0c4" stroke-width="0.85"/><circle cx="17.48" cy="20.52" r="4.56" fill="none" stroke="#3f79a6" stroke-width="0.85"/><circle cx="17.48" cy="34.05" r="4.56" fill="none" stroke="#3f79a6" stroke-width="0.85"/><circle cx="35.27" cy="16.57" r="4.56" fill="none" stroke="#3f79a6" stroke-width="0.85"/><circle cx="35.27" cy="30.25" r="4.56" fill="none" stroke="#3f79a6" stroke-width="0.85"/><circle cx="35.27" cy="35.27" r="4.56" fill="none" stroke="#6aa0c4" stroke-width="0.85"/><circle cx="53.21" cy="16.27" r="4.56" fill="none" stroke="#6aa0c4" stroke-width="0.85"/><circle cx="53.21" cy="23.87" r="4.56" fill="none" stroke="#a6d0e6" stroke-width="0.85"/><circle cx="53.21" cy="39.37" r="4.56" fill="none" stroke="#a6d0e6" stroke-width="0.85"/><path d="M31.16 46.21 A4.56 4.56 0 0 1 40.29 46.21" fill="none" stroke="#a6d0e6" stroke-width="0.85"/></g></g>
<g transform="translate(1368,285)"><rect x="0.5" y="0.5" width="68" height="51" fill="#fff" stroke="#dcdcdc" stroke-width="1"/><g transform="translate(0.5,0.4)"><path d="M35.27 5.62 V45.61" stroke="#cfcfcf" stroke-width="0.5"/><circle cx="15.51" cy="14.75" r="3.65" fill="none" stroke="#3f79a6" stroke-width="0.85"/><circle cx="15.51" cy="19.76" r="3.65" fill="none" stroke="#a6d0e6" stroke-width="0.85"/><circle cx="25.39" cy="18.55" r="3.65" fill="none" stroke="#3f79a6" stroke-width="0.85"/><circle cx="25.39" cy="30.71" r="3.65" fill="none" stroke="#a6d0e6" stroke-width="0.85"/><circle cx="15.51" cy="38.01" r="3.65" fill="none" stroke="#a6d0e6" stroke-width="0.85"/><circle cx="25.39" cy="40.13" r="3.65" fill="none" stroke="#3f79a6" stroke-width="0.85"/><circle cx="45.15" cy="15.2" r="3.65" fill="none" stroke="#a6d0e6" stroke-width="0.85"/><circle cx="54.73" cy="19.31" r="3.65" fill="none" stroke="#3f79a6" stroke-width="0.85"/><circle cx="54.73" cy="23.87" r="3.65" fill="none" stroke="#6aa0c4" stroke-width="0.85"/><circle cx="45.15" cy="33.75" r="3.65" fill="none" stroke="#3f79a6" stroke-width="0.85"/><circle cx="45.15" cy="37.55" r="3.65" fill="none" stroke="#a6d0e6" stroke-width="0.85"/><circle cx="54.73" cy="36.03" r="3.65" fill="none" stroke="#a6d0e6" stroke-width="0.85"/></g></g>
<g transform="translate(1218,342)"><rect x="0.5" y="0.5" width="68" height="51" fill="#fff" stroke="#dcdcdc" stroke-width="1"/><g transform="translate(0.5,0.4)"><polyline points="11.86,16.27 19.0,10.49 30.1,25.69 39.68,17.79 47.28,24.63 57.46,19.31" fill="none" stroke="#fbdfae" stroke-width="1.35" stroke-linejoin="round"/><polyline points="11.4,22.8 19.0,25.39 30.1,16.27 39.68,24.63 48.34,29.95 57.46,27.67" fill="none" stroke="#fdecd2" stroke-width="1.35" stroke-linejoin="round"/><polyline points="11.1,30.4 19.0,37.85 35.42,28.73 47.58,36.79 57.46,34.51" fill="none" stroke="#bfd6e0" stroke-width="1.35" stroke-linejoin="round"/></g></g>
<g transform="translate(1293,342)"><rect x="0.5" y="0.5" width="68" height="51" fill="#fff" stroke="#dcdcdc" stroke-width="1"/><g transform="translate(0.5,0.4)"><path d="M34.97 5.62 V45.61" stroke="#e2e2e2" stroke-width="0.5"/><polyline points="11.1,21.89 17.48,23.56 24.63,16.27 31.16,17.03" fill="none" stroke="#fbdfae" stroke-width="1.35" stroke-linejoin="round"/><polyline points="11.1,28.73 17.48,27.36 24.63,20.07 31.16,24.63" fill="none" stroke="#fdecd2" stroke-width="1.35" stroke-linejoin="round"/><polyline points="11.1,35.73 17.48,38.01 24.63,31.92 31.16,31.92" fill="none" stroke="#bfd6e0" stroke-width="1.35" stroke-linejoin="round"/><polyline points="38.46,21.89 44.85,14.29 50.93,18.85 58.53,17.03" fill="none" stroke="#fbdfae" stroke-width="1.35" stroke-linejoin="round"/><polyline points="38.46,28.73 44.85,26.15 50.93,27.97 58.53,24.17" fill="none" stroke="#fdecd2" stroke-width="1.35" stroke-linejoin="round"/><polyline points="38.46,36.03 44.85,31.92 50.93,34.51 58.53,31.92" fill="none" stroke="#bfd6e0" stroke-width="1.35" stroke-linejoin="round"/></g></g>
<g transform="translate(1368,342)"><rect x="0.5" y="0.5" width="68" height="51" fill="#fff" stroke="#dcdcdc" stroke-width="1"/><g transform="translate(0.5,0.4)"><path d="M9.88 10.19 H12.47 M9.88 15.96 H12.47 M9.88 22.04 H12.47 M9.88 28.12 H12.47 M9.88 34.2 H12.47 M9.88 40.13 H12.47 M57.77 10.19 H60.81 M57.77 13.23 H60.81 M57.77 16.27 H60.81 M57.77 19.31 H60.81 M57.77 22.35 H60.81 M57.77 25.08 H60.81 M57.77 28.12 H60.81 M57.77 31.16 H60.81 M57.77 34.2 H60.81 M57.77 37.09 H60.81 M57.77 40.13 H60.81 " stroke="#ececec" stroke-width="0.6" fill="none"/><polyline points="16.27,19.0 24.93,10.95 33.44,18.85 39.22,15.2 48.65,21.59 54.73,17.03" fill="none" stroke="#fbdfae" stroke-width="1.35" stroke-linejoin="round"/><polyline points="16.27,27.97 24.32,23.87 33.44,34.05 39.22,30.71 48.65,35.57 54.73,27.67" fill="none" stroke="#bfd6e0" stroke-width="1.35" stroke-linejoin="round"/></g></g>
<g transform="translate(1218,399)"><rect x="0.5" y="0.5" width="68" height="51" fill="#fff" stroke="#dcdcdc" stroke-width="1"/><g transform="translate(0.5,0.4)"><polygon points="9.88,26.91 21.44,12.47 41.96,25.69 59.44,20.52 59.44,43.63 9.88,43.63" fill="#c6d9e4"/><polygon points="9.88,28.43 21.44,20.83 41.96,33.75 59.44,23.87 59.44,43.63 9.88,43.63" fill="#fbe3bb"/><polygon points="9.88,35.27 21.44,30.71 41.96,37.09 59.44,32.23 59.44,43.63 9.88,43.63" fill="#fdf1df"/></g></g>
<g transform="translate(1293,399)"><rect x="0.5" y="0.5" width="68" height="51" fill="#fff" stroke="#dcdcdc" stroke-width="1"/><g transform="translate(0.5,0.4)"><polygon points="9.88,26.15 15.2,12.77 25.08,26.15 33.75,20.83 33.75,43.63 9.88,43.63" fill="#c6d9e4"/><polygon points="9.88,27.67 15.2,20.83 25.08,33.75 33.75,24.63 33.75,43.63 9.88,43.63" fill="#fbe3bb"/><polygon points="9.88,34.51 15.2,30.71 25.08,37.55 33.75,32.23 33.75,43.63 9.88,43.63" fill="#fdf1df"/><polygon points="36.03,26.15 41.35,12.77 51.23,26.15 59.9,20.83 59.9,43.63 36.03,43.63" fill="#c6d9e4"/><polygon points="36.03,27.67 41.35,20.83 51.23,33.75 59.9,24.63 59.9,43.63 36.03,43.63" fill="#fbe3bb"/><polygon points="36.03,34.51 41.35,30.71 51.23,37.55 59.9,32.23 59.9,43.63 36.03,43.63" fill="#fdf1df"/></g></g>
<g transform="translate(1368,399)"><rect x="0.5" y="0.5" width="68" height="51" fill="#fff" stroke="#dcdcdc" stroke-width="1"/><g transform="translate(0.5,0.4)"><path d="M9.88 10.19 H12.47 M9.88 15.96 H12.47 M9.88 22.04 H12.47 M9.88 28.12 H12.47 M9.88 34.2 H12.47 M9.88 40.13 H12.47 M57.77 10.19 H60.81 M57.77 13.23 H60.81 M57.77 16.27 H60.81 M57.77 19.31 H60.81 M57.77 22.35 H60.81 M57.77 25.08 H60.81 M57.77 28.12 H60.81 M57.77 31.16 H60.81 M57.77 34.2 H60.81 M57.77 37.09 H60.81 M57.77 40.13 H60.81 " stroke="#ececec" stroke-width="0.6" fill="none"/><rect x="16.72" y="26.91" width="4.86" height="16.72" fill="#c6d9e4"/><rect x="24.93" y="21.89" width="4.71" height="21.74" fill="#c6d9e4"/><rect x="32.99" y="30.71" width="4.71" height="12.92" fill="#c6d9e4"/><rect x="41.05" y="12.77" width="4.71" height="30.86" fill="#c6d9e4"/><rect x="48.95" y="25.69" width="4.71" height="17.94" fill="#c6d9e4"/><polyline points="17.79,23.11 26.91,14.75 35.27,26.91 43.63,18.55 52.75,26.91" fill="none" stroke="#fbdfae" stroke-width="1.35" stroke-linejoin="round"/></g></g>
<g transform="translate(1218,456)"><rect x="1" y="1" width="67" height="50" rx="1" fill="#fff" stroke="#d95f39" stroke-width="2"/><g transform="translate(0.5,0.4)"><circle cx="28.58" cy="16.72" r="3.5" fill="none" stroke="#f5a050" stroke-width="1.0"/><circle cx="49.56" cy="18.55" r="3.5" fill="none" stroke="#f5a050" stroke-width="1.0"/><circle cx="20.52" cy="26.6" r="3.5" fill="none" stroke="#f5a050" stroke-width="1.0"/><circle cx="31.62" cy="30.71" r="3.5" fill="none" stroke="#f5a050" stroke-width="1.0"/><circle cx="14.59" cy="38.77" r="3.5" fill="none" stroke="#f5a050" stroke-width="1.0"/><path d="M37.55 12.01 H46.37 M41.96 7.6 V16.42 M33.6 23.41 H42.41 M38.01 19.0 V27.82 M48.8 29.19 H57.62 M53.21 24.78 V33.6 M19.61 36.33 H28.43 M24.02 31.92 V40.74 M37.55 35.27 H46.37 M41.96 30.86 V39.68 " stroke="#4da07c" stroke-width="1.05" fill="none"/></g></g>
<g transform="translate(1293,456)"><rect x="0.5" y="0.5" width="68" height="51" fill="#fff" stroke="#dcdcdc" stroke-width="1"/><g transform="translate(0.5,0.4)"><rect x="12.92" y="39.83" width="3.8" height="2.74" fill="#cfe8dc"/><rect x="17.94" y="34.97" width="3.8" height="7.6" fill="#cfe8dc"/><rect x="22.8" y="25.84" width="3.8" height="16.72" fill="#cfe8dc"/><rect x="27.82" y="15.81" width="3.8" height="26.76" fill="#cfe8dc"/><rect x="32.84" y="11.71" width="3.8" height="30.86" fill="#cfe8dc"/><rect x="37.85" y="15.81" width="3.8" height="26.76" fill="#cfe8dc"/><rect x="42.87" y="25.84" width="3.8" height="16.72" fill="#cfe8dc"/><rect x="47.89" y="34.97" width="3.8" height="7.6" fill="#cfe8dc"/><rect x="52.9" y="39.83" width="3.8" height="2.74" fill="#cfe8dc"/></g></g>
<g transform="translate(1368,456)"><rect x="0.5" y="0.5" width="68" height="51" fill="#fff" stroke="#dcdcdc" stroke-width="1"/><g transform="translate(0.5,0.4)"><rect x="13.53" y="22.8" width="6.99" height="4.1" fill="#a3dbbb"/><rect x="13.53" y="26.91" width="6.99" height="7.6" fill="#55a883"/><path d="M17.03 15.2 V38.01 M14.59 15.2 H19.46 M14.59 38.01 H19.46" stroke="#2b2b2b" stroke-width="0.75" fill="none"/><rect x="25.69" y="17.79" width="6.99" height="9.12" fill="#a3dbbb"/><rect x="25.69" y="26.91" width="6.99" height="4.86" fill="#55a883"/><path d="M29.19 13.23 V40.13 M26.76 13.23 H31.62 M26.76 40.13 H31.62" stroke="#2b2b2b" stroke-width="0.75" fill="none"/><rect x="37.85" y="20.83" width="6.99" height="8.36" fill="#a3dbbb"/><rect x="37.85" y="29.19" width="6.99" height="7.3" fill="#55a883"/><path d="M41.35 12.16 V41.05 M38.92 12.16 H43.78 M38.92 41.05 H43.78" stroke="#2b2b2b" stroke-width="0.75" fill="none"/><rect x="49.71" y="15.81" width="6.99" height="12.16" fill="#a3dbbb"/><rect x="49.71" y="27.97" width="6.99" height="4.56" fill="#55a883"/><path d="M53.21 10.19 V42.11 M50.78 10.19 H55.64 M50.78 42.11 H55.64" stroke="#2b2b2b" stroke-width="0.75" fill="none"/></g></g>
<g transform="translate(1218,513)"><rect x="0.5" y="0.5" width="68" height="51" fill="#fff" stroke="#dcdcdc" stroke-width="1"/><g transform="translate(0.5,0.4)"><rect x="10.79" y="8.97" width="8.67" height="7.6" fill="#c8e6d8"/><rect x="26.76" y="8.97" width="3.65" height="7.6" fill="#f8dcb8"/><rect x="31.92" y="8.97" width="3.5" height="7.6" fill="#fdebc8"/><rect x="42.72" y="8.97" width="1.82" height="7.6" fill="#f8dcb8"/><rect x="48.8" y="8.97" width="7.91" height="7.6" fill="#fdebc8"/><rect x="10.79" y="20.83" width="5.62" height="7.6" fill="#dcedeb"/><rect x="17.63" y="20.83" width="2.89" height="7.6" fill="#c8e6d8"/><rect x="24.78" y="20.83" width="3.8" height="7.6" fill="#c8e6d8"/><rect x="31.92" y="20.83" width="13.68" height="7.6" fill="#dcedeb"/><rect x="50.78" y="20.83" width="7.6" height="7.6" fill="#f8dcb8"/><rect x="10.79" y="33.75" width="1.67" height="7.6" fill="#c8e6d8"/><rect x="15.66" y="33.75" width="7.91" height="7.6" fill="#fdebc8"/><rect x="25.54" y="33.75" width="1.98" height="7.6" fill="#f8dcb8"/><rect x="29.8" y="33.75" width="3.65" height="7.6" fill="#dcedeb"/><rect x="39.68" y="33.75" width="6.84" height="7.6" fill="#c8e6d8"/><rect x="52.6" y="33.75" width="4.1" height="7.6" fill="#fdebc8"/></g></g>
<g transform="translate(1293,513)"><rect x="0.5" y="0.5" width="68" height="51" fill="#fff" stroke="#dcdcdc" stroke-width="1"/><g transform="translate(0.5,0.4)"><rect x="11.71" y="9.88" width="28.58" height="7.6" fill="#dedede"/><rect x="40.29" y="9.88" width="11.4" height="7.6" fill="#ebebeb"/><rect x="51.69" y="9.88" width="5.78" height="7.6" fill="#f5f5f5"/><rect x="11.71" y="12.01" width="25.08" height="3.65" fill="#55a883"/><rect x="39.98" y="9.88" width="0.61" height="7.6" fill="#222"/><rect x="11.71" y="21.89" width="28.58" height="7.6" fill="#dedede"/><rect x="40.29" y="21.89" width="11.4" height="7.6" fill="#ebebeb"/><rect x="51.69" y="21.89" width="5.78" height="7.6" fill="#f5f5f5"/><rect x="11.71" y="24.02" width="39.98" height="3.65" fill="#55a883"/><rect x="46.82" y="21.89" width="0.61" height="7.6" fill="#222"/><rect x="11.71" y="33.75" width="25.08" height="7.6" fill="#dedede"/><rect x="36.79" y="33.75" width="14.9" height="7.6" fill="#ebebeb"/><rect x="51.69" y="33.75" width="5.78" height="7.6" fill="#f5f5f5"/><rect x="11.71" y="35.88" width="20.98" height="3.65" fill="#55a883"/><rect x="52.9" y="33.75" width="0.61" height="7.6" fill="#222"/></g></g>
<g transform="translate(1368,513)"><rect x="0.5" y="0.5" width="68" height="51" fill="#fff" stroke="#dcdcdc" stroke-width="1"/><g transform="translate(0.5,0.4)"><circle cx="22.04" cy="32.23" r="9.43" fill="#9dd8b5"/><circle cx="23.11" cy="18.24" r="3.5" fill="#55a883"/><circle cx="32.68" cy="15.51" r="4.86" fill="#55a883"/><circle cx="42.11" cy="16.72" r="3.04" fill="#9dd8b5"/><circle cx="52.3" cy="21.28" r="6.54" fill="#f7b272"/><circle cx="37.25" cy="26.6" r="5.47" fill="#f7b272"/><circle cx="46.67" cy="31.77" r="3.65" fill="#e0813c"/><circle cx="36.79" cy="38.01" r="4.1" fill="#55a883"/></g></g>
<rect x="1291" y="616.2" width="113" height="24" rx="12" fill="#4a93b0"/>
<rect x="1262" y="650" width="98" height="24" rx="12" fill="#00b080"/></svg>
<span class="t" style="left:1359.64px;top:62px;font-size:17px;color:#222;transform:scaleX(1.0173);">Show Me</span>
<span class="t" style="left:1219.20px;top:587px;font-size:14.5px;color:#2b2b2b;transform:scaleX(1.0420);">For</span>
<span class="t" style="left:1246.27px;top:587px;font-size:14.5px;color:#222;transform:scaleX(1.0557);font-weight:700;">scatter plots</span>
<span class="t" style="left:1340.91px;top:587px;font-size:14.5px;color:#2b2b2b;transform:scaleX(1.1556);">try</span>
<span class="t" style="left:1219.95px;top:618px;font-size:14.5px;color:#2b2b2b;transform:scaleX(1.0902);">0 or more</span>
<span class="t" style="left:1303.42px;top:619px;font-size:14.5px;color:#fff;transform:scaleX(1.1054);">Dimensions</span>
<span class="t" style="left:1219.69px;top:652px;font-size:14.5px;color:#2b2b2b;transform:scaleX(1.0829);">2 to 4</span>
<span class="t" style="left:1274.43px;top:653px;font-size:14.5px;color:#fff;transform:scaleX(1.0984);">Measures</span>
</div>
</body></html>
